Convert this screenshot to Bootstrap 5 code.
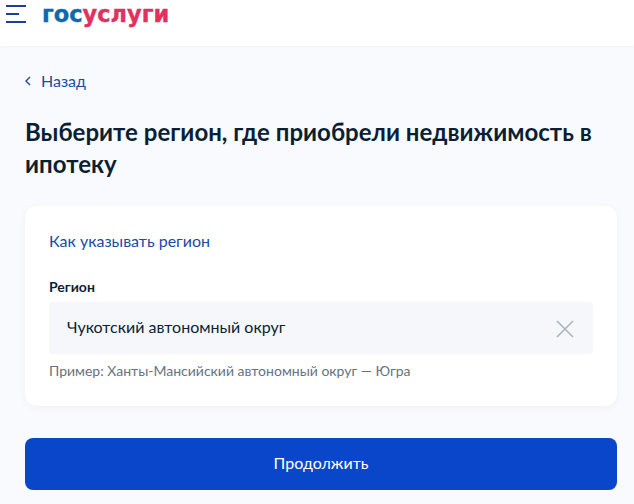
<!DOCTYPE html>
<html lang="ru">
<head>
<meta charset="utf-8">
<title>Госуслуги</title>
<link href="https://cdn.jsdelivr.net/npm/bootstrap@5.3.0/dist/css/bootstrap.min.css" rel="stylesheet">
<style>
html,body{height:504px;overflow:hidden}
body{background:#f8fafe;font-family:Lato,"Noto Sans",sans-serif;color:#0b1f33;font-size:16px}
.topbar{height:46px;background:#fff;padding-left:6px;box-shadow:0 1px 2px rgba(11,31,51,.03)}
.burger{width:20px;margin-top:5px;gap:6px}
.burger span{display:block;height:2px;background:#1d3f9c}
.burger span:nth-child(2){width:13px}
.brand{font-family:"DejaVu Sans",sans-serif;font-weight:700;font-size:23.5px;line-height:28px;margin-left:16px;transform:scaleX(.957);transform-origin:left top;white-space:nowrap;-webkit-text-stroke:.4px currentColor}
.brand-a{color:#0d6aa8}.brand-b{color:#e0315f}
.wrap{padding:0 17px 0 25px}
.backlink{height:20px;line-height:20px;margin-top:26px;text-decoration:none;gap:10px;font-size:16px;color:#1b4aa8;position:relative;top:-1px}
.page-title{font-size:24px;line-height:32px;font-weight:700;margin:24px 0 0;color:#0b1f33;letter-spacing:.02px}
.form-box{background:#fff;border:0;border-radius:12px;margin-top:26px;height:200px;padding:23px 24px 24px;box-shadow:0 2px 8px rgba(11,31,51,.04)}
.howto{color:#1b4aa8;text-decoration:none;line-height:24px}
.lbl{font-size:14px;font-weight:700;line-height:20px;margin:24px 0 5px}
.fieldbox{height:52px;background:#f5f7fa;border-radius:4px;padding:0 19px 2px 18px;font-size:16px}
.hint{font-size:14px;line-height:20px;color:#66727f;margin-top:7px}
.go{background:#0a46c9;border:0;border-radius:8px;height:52px;margin-top:32px;padding-bottom:8px;font-size:16px;color:#fff}
.go:hover{background:#0a46c9}
</style>
</head>
<body>
<header class="topbar d-flex align-items-start">
  <div class="burger d-flex flex-column"><span></span><span></span><span></span></div>
  <div class="brand"><span class="brand-a">гос</span><span class="brand-b">услуги</span></div>
</header>
<main class="wrap">
  <a class="backlink d-flex align-items-center" href="#">
    <svg width="6" height="10" viewBox="0 0 6 10" fill="none"><path d="M5 1 1 5l4 4" stroke="#1b4aa8" stroke-width="1.4"/></svg>
    <span>Назад</span>
  </a>
  <h1 class="page-title">Выберите регион, где приобрели недвижимость в ипотеку</h1>
  <section class="card form-box">
    <a class="howto" href="#">Как указывать регион</a>
    <div class="lbl">Регион</div>
    <div class="fieldbox d-flex align-items-center justify-content-between">
      <span>Чукотский автономный округ</span>
      <svg class="mt-1" width="18" height="18" viewBox="0 0 18 18" fill="none"><path d="M1 1l16 16M17 1 1 17" stroke="#aab3c4" stroke-width="1.6"/></svg>
    </div>
    <div class="hint">Пример: Ханты-Мансийский автономный округ — Югра</div>
  </section>
  <button class="btn go w-100" type="button">Продолжить</button>
</main>
<script src="https://cdn.jsdelivr.net/npm/bootstrap@5.3.0/dist/js/bootstrap.bundle.min.js"></script>
</body>
</html>
